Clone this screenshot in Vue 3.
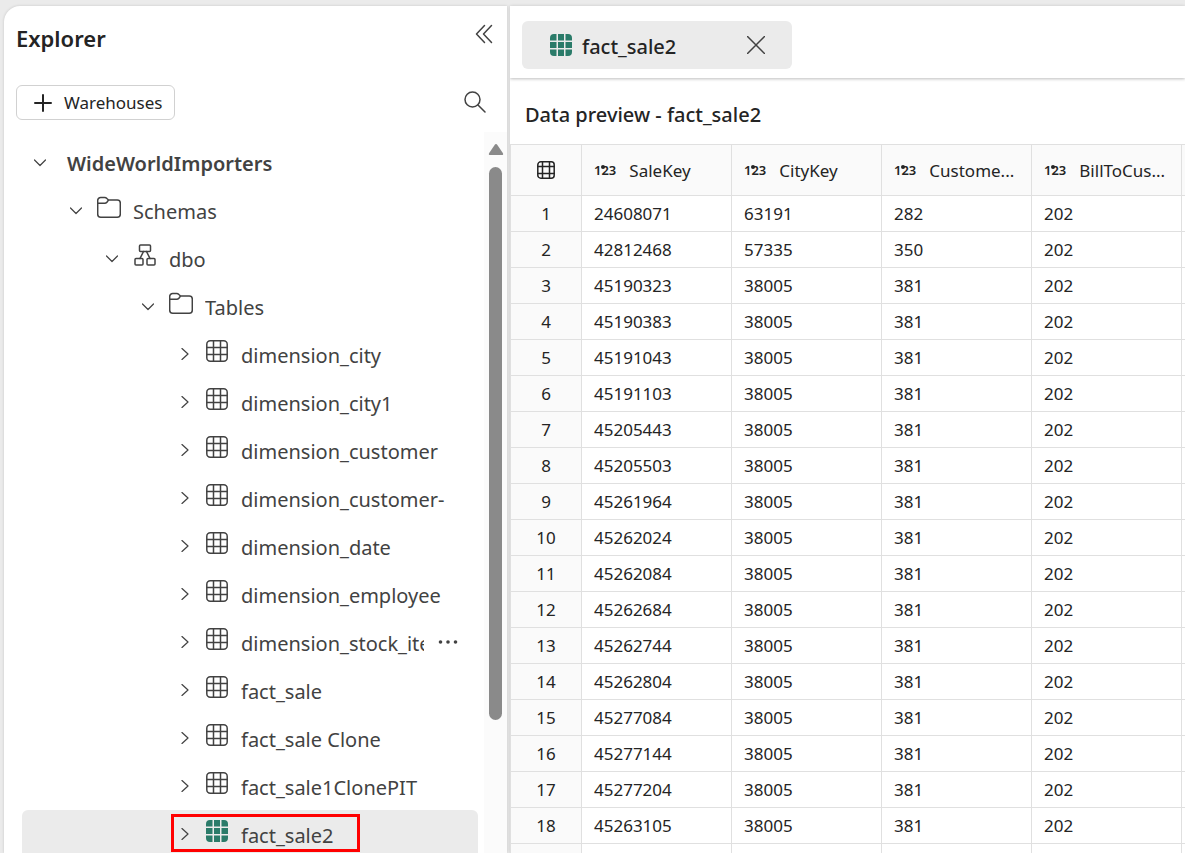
<script setup>
import { ref } from 'vue'

const tree = [
  { name: 'WideWorldImporters', level: 0, open: true },
  { name: 'Schemas', level: 1, open: true, icon: 'folder' },
  { name: 'dbo', level: 2, open: true, icon: 'schema' },
  { name: 'Tables', level: 3, open: true, icon: 'folder' },
  { name: 'dimension_city', level: 4, icon: 'table' },
  { name: 'dimension_city1', level: 4, icon: 'table' },
  { name: 'dimension_customer', level: 4, icon: 'table' },
  { name: 'dimension_customer-', level: 4, icon: 'table' },
  { name: 'dimension_date', level: 4, icon: 'table' },
  { name: 'dimension_employee', level: 4, icon: 'table' },
  { name: 'dimension_stock_item', level: 4, icon: 'table', more: true },
  { name: 'fact_sale', level: 4, icon: 'table' },
  { name: 'fact_sale Clone', level: 4, icon: 'table' },
  { name: 'fact_sale1ClonePIT', level: 4, icon: 'table' },
  { name: 'fact_sale2', level: 4, icon: 'filled', selected: true }
]

const columns = ['SaleKey', 'CityKey', 'Custome...', 'BillToCus...']

const saleKeys = [
  24608071, 42812468, 45190323, 45190383, 45191043, 45191103, 45205443, 45205503, 45261964,
  45262024, 45262084, 45262684, 45262744, 45262804, 45277084, 45277144, 45277204, 45263105
]
const special = { 0: [63191, 282], 1: [57335, 350] }
const rows = ref(saleKeys.map((k, i) => [k, ...(special[i] || [38005, 381]), 202]))
</script>

<template>
  <div class="app">
    <aside class="explorer">
      <header class="explorer-head">
        <h1>Explorer</h1>
        <button class="plain collapse" aria-label="Collapse explorer">
          <svg width="18" height="20" viewBox="0 0 18 20"><path d="M9.500 1.500 1.500 10l8 8.500M16.500 1.500 8.500 10l8 8.500" /></svg>
        </button>
      </header>
      <div class="tools">
        <button class="add">
          <svg width="18" height="18" viewBox="0 0 18 18"><path d="M9 1v16M1 9h16" /></svg>
          <span>Warehouses</span>
        </button>
        <button class="plain search" aria-label="Search">
          <svg width="22" height="22" viewBox="0 0 22 22"><circle cx="8.500" cy="8.500" r="7.500" /><path d="m14 14 7 7" /></svg>
        </button>
      </div>
      <div class="tree-area">
        <ul class="tree">
          <li v-for="n in tree" :key="n.name" class="node" :class="['level-' + n.level, { selected: n.selected }]">
            <button class="plain chevron" :aria-label="'Toggle ' + n.name">
              <svg v-if="n.open" width="12" height="12" viewBox="0 0 12 12"><path d="m0.500 4 5.500 5.500 5.500-5.500" /></svg>
              <svg v-else width="12" height="12" viewBox="0 0 12 12"><path d="m4 0.500 6 5.500-6 5.500" /></svg>
            </button>
            <svg v-if="n.icon === 'folder'" class="node-icon" width="24" height="24" viewBox="0 0 24 24">
              <path d="M.7 5.500a3 3 0 0 1 3-3h4c1 0 1.600.4 2.200 1l1.600 1.500h8.800a3 3 0 0 1 3 3v11.300a3 3 0 0 1-3 3H3.700a3 3 0 0 1-3-3zM.7 8.300h7c1 0 1.600-.3 2.200-1l1.600-2.300" />
            </svg>
            <svg v-else-if="n.icon === 'schema'" class="node-icon" width="24" height="24" viewBox="0 0 24 24">
              <rect x="6.500" y="2" width="11" height="6.500" rx="1" /><rect x="2" y="15.500" width="8" height="6.500" rx="1" /><rect x="14" y="15.500" width="8" height="6.500" rx="1" /><path d="M10.500 8.500 7 15.500M13.500 8.500l3.500 7" />
            </svg>
            <svg v-else-if="n.icon === 'table'" class="node-icon" width="24" height="24" viewBox="0 0 24 24">
              <rect x="1.800" y="1.800" width="20.400" height="20.400" rx="3.500" /><path d="M8.500 2v20M15.500 2v20M2 8.500h20M2 15.500h20" />
            </svg>
            <svg v-else-if="n.icon === 'filled'" class="node-icon filled" width="24" height="24" viewBox="0 0 24 24">
              <path d="M7.500 1v6.500H1V5a4 4 0 0 1 4-4zM9 1h6v6.500H9zM16.500 1H19a4 4 0 0 1 4 4v2.500h-6.500zM1 9h6.500v6H1zM9 9h6v6H9zM16.500 9H23v6h-6.500zM1 16.500h6.500V23H5a4 4 0 0 1-4-4zM9 16.500h6V23H9zM16.500 16.500H23V19a4 4 0 0 1-4 4h-2.500z" />
            </svg>
            <span class="label">{{ n.name }}</span>
            <button v-if="n.more" class="plain more" aria-label="More options">
              <svg width="20" height="6" viewBox="0 0 20 6"><circle cx="2.500" cy="3" r="1.800" /><circle cx="10" cy="3" r="1.800" /><circle cx="17.500" cy="3" r="1.800" /></svg>
            </button>
            <span v-if="n.selected" class="highlight"></span>
          </li>
        </ul>
        <div class="scrollbar">
          <svg width="16" height="12" viewBox="0 0 16 12"><path d="M8 0c.6 0 1 .4 1.400.9l5.400 8c.8 1.300.3 2.100-1 2.100H2.200c-1.300 0-1.800-.8-1-2.100l5.400-8C7 .4 7.400 0 8 0z" /></svg>
          <div class="thumb"></div>
        </div>
      </div>
    </aside>

    <main class="content">
      <div class="tabs">
        <div class="tab">
          <svg class="filled" width="24" height="24" viewBox="0 0 24 24">
            <path d="M7.500 1v6.500H1V5a4 4 0 0 1 4-4zM9 1h6v6.500H9zM16.500 1H19a4 4 0 0 1 4 4v2.500h-6.500zM1 9h6.500v6H1zM9 9h6v6H9zM16.500 9H23v6h-6.500zM1 16.500h6.500V23H5a4 4 0 0 1-4-4zM9 16.500h6V23H9zM16.500 16.500H23V19a4 4 0 0 1-4 4h-2.500z" />
          </svg>
          <span class="tab-name">fact_sale2</span>
          <button class="plain close" aria-label="Close tab">
            <svg width="18" height="18" viewBox="0 0 18 18"><path d="m.5.5 17 17M17.500.5l-17 17" /></svg>
          </button>
        </div>
      </div>
      <h2>Data preview - fact_sale2</h2>
      <table>
        <colgroup><col class="c-index" /><col v-for="c in columns" :key="c" class="c-data" /><col /></colgroup>
        <thead>
          <tr>
            <th class="index">
              <svg class="grid" width="20" height="20" viewBox="0 0 20 20"><rect x="1.800" y="1.800" width="16.400" height="16.400" rx="3" /><path d="M6.500 2v16M13.500 2v16M2 6.500h16M2 13.500h16" /></svg>
            </th>
            <th v-for="c in columns" :key="c">
              <div class="head"><span class="type">123</span><span>{{ c }}</span></div>
            </th>
            <th></th>
          </tr>
        </thead>
        <tbody>
          <tr v-for="(r, i) in rows" :key="i">
            <td class="index">{{ i + 1 }}</td>
            <td v-for="(v, j) in r" :key="j">{{ v }}</td>
            <td></td>
          </tr>
          <tr><td class="index"></td><td v-for="j in 5" :key="j"></td></tr>
        </tbody>
      </table>
    </main>
  </div>
</template>

<style>
html, body { margin: 0; overflow: hidden; }
</style>

<style scoped>
* { box-sizing: border-box; }
.app {
  display: flex;
  gap: 3px;
  height: 100vh;
  padding: 6px 0 0 4px;
  overflow: hidden;
  background: #ebebeb;
  color: #242424;
  font-family: "Noto Sans", "Open Sans", sans-serif;
  font-size: 17px;
}
svg { display: block; flex: none; fill: none; stroke: #424242; stroke-width: 1.5; stroke-linecap: round; stroke-linejoin: round; }
.filled { fill: #2a7b69; stroke: none; }
.plain { display: flex; align-items: center; justify-content: center; padding: 0; border: 0; background: none; }
h1, h2 { margin: 0; font-weight: 600; }

.explorer {
  display: flex;
  flex-direction: column;
  flex: 0 0 503px;
  min-width: 0;
  background: #fff;
  border-radius: 16px 0 0 0;
  box-shadow: 0 0 3px rgba(0, 0, 0, 0.16);
}
.explorer-head { display: flex; justify-content: space-between; padding: 16px 14px 0 12px; }
h1 { font-size: 22px; line-height: 32px; }
.collapse { width: 18px; height: 24px; }
.tools { display: flex; align-items: center; justify-content: space-between; padding: 31px 21px 0 12px; }
.search { height: 24px; padding-bottom: 2px; }
.add {
  display: flex;
  align-items: center;
  gap: 12px;
  height: 35px;
  padding: 0 12px 0 17px;
  border: 1px solid #d1d1d1;
  border-radius: 6px;
  background: #fff;
  color: #242424;
  font: inherit;
}
.add svg { stroke: #242424; stroke-width: 2; }
.tree-area { display: flex; justify-content: space-between; flex: 1; min-height: 0; margin-top: 12px; overflow: hidden; }
.tree { flex: 1; min-width: 0; margin: 0 6px 0 18px; padding: 6px 0 0; list-style: none; color: #424242; font-size: 20px; }
.node { position: relative; display: flex; align-items: center; height: 48px; padding-left: 12px; border-radius: 6px; }
.level-1 { padding-left: 48px; }
.level-2 { padding-left: 84px; }
.level-3 { padding-left: 120px; }
.level-4 { padding-left: 156px; }
.selected { background: #ebebeb; }
.chevron { flex: none; width: 12px; height: 24px; margin-right: 15px; }
.chevron svg { stroke-width: 1.2; }
.node-icon { margin: 0 12px 6px 0; }
.label { flex: 1; min-width: 0; overflow: hidden; white-space: nowrap; line-height: 46px; padding-top: 4px; }
.level-0 .label { padding-left: 6px; font-weight: 600; }
.more { flex: none; width: 24px; height: 24px; margin: 0 18px 0 12px; }
.more svg { fill: #424242; stroke: none; }
.highlight { position: absolute; top: 4px; left: 149px; width: 189px; height: 38px; border: 3px solid #f00; pointer-events: none; }
.scrollbar { display: flex; flex: none; flex-direction: column; align-items: center; gap: 11px; width: 23px; padding-top: 12px; background: #fbfbfb; }
.scrollbar svg { fill: #8a8a8a; stroke: none; }
.thumb { width: 13px; height: 78%; border-radius: 7px; background: #8a8a8a; }

.content { flex: 1; min-width: 0; overflow: hidden; background: #fff; box-shadow: 0 0 3px rgba(0, 0, 0, 0.16); }
.tabs { height: 72px; padding: 15px 12px 0; box-shadow: 0 1px 3px rgba(0, 0, 0, 0.26); }
.tab { display: flex; align-items: center; width: 270px; height: 48px; padding: 0 27px; border-radius: 6px; background: #ebebeb; }
.tab-name { flex: 1; margin-left: 9px; padding-top: 2px; font-size: 20px; font-weight: 500; }
.close { width: 18px; height: 24px; }
h2 { padding: 21px 15px 13px; font-size: 20px; line-height: 32px; font-weight: 500; }

table { width: 100%; table-layout: fixed; border-spacing: 0; border-top: 1px solid #e0e0e0; border-left: 1px solid #e0e0e0; }
.c-index { width: 71px; }
.c-data { width: 150px; }
th, td { height: 36px; padding: 1px 12px 0; border-right: 1px solid #e0e0e0; border-bottom: 1px solid #e0e0e0; text-align: left; font-weight: 400; line-height: 24px; white-space: nowrap; }
th { height: 51px; background: #fafafa; }
th:last-child, td:last-child { padding: 0; border-right: 0; }
.index { background: #fafafa; text-align: center; }
th.index { padding-top: 0; }
.index svg { margin: 0 auto; }
.grid { stroke: #242424; }
.head { display: flex; align-items: center; gap: 13px; padding-top: 1px; }
.type { position: relative; padding-bottom: 2px; font-size: 13px; font-weight: 600; line-height: 20px; }
.type::after { content: ""; position: absolute; top: 5px; left: 7px; width: 4px; height: 4px; border-radius: 2px; background: #242424; }
</style>
